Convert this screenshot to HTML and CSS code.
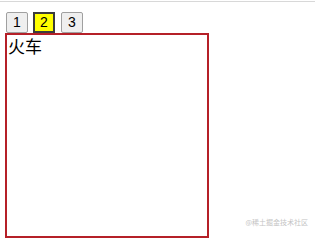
FILE: index.html
```html
<!DOCTYPE html>
<html lang="zh-CN">

<head>
	<title>Tabs</title>
	<meta charset="utf-8">
	<meta name="viewport" content="width=device-width, initial-scale=1.0">
	<link rel="stylesheet" href="styles.css">
</head>

<body>

	<div class="topline"></div>

	<div class="tabs">
		<button class="tab">1</button>
		<button class="tab active">2</button>
		<button class="tab">3</button>
	</div>

	<div class="panel">火车</div>

	<div class="watermark">@稀土掘金技术社区</div>

</body>

</html>
```

FILE: styles.css
```css
*,
*:before,
*:after {
	box-sizing: border-box;
}

body {
	font-family: "Noto Sans CJK SC", "Liberation Sans", sans-serif;
	margin: 0;
	padding: 0 5px;
	position: relative;
	height: 246px;
	background: #ffffff;
}

.topline {
	border-top: 1px solid #d8d8d8;
	margin: 1px -5px 0;
}

/**
 * Tabs
 */
.tabs {
	display: flex;
	gap: 5px;
	margin-top: 10px;
	padding-left: 1px;
}

.tab {
	font-family: "Liberation Sans", sans-serif;
	font-size: 14px;
	width: 22px;
	height: 21px;
	padding: 0;
	background-color: #efefef;
	border: 1px solid #a0a0a0;
	border-radius: 2px;
	color: #000000;
	line-height: 19px;
}

.tab.active {
	background-color: #ffff00;
	border: 2px solid #3c3c3c;
	border-radius: 0;
	line-height: 17px;
}

.tab.active + .tab {
	margin-left: 1px;
}

/**
 * Panel
 */
.panel {
	width: 204px;
	height: 205px;
	margin-top: 0;
	border: 2px solid #b52028;
	font-size: 17px;
	line-height: 22px;
	padding-left: 1px;
	color: #000000;
}

.watermark {
	position: absolute;
	right: 7px;
	top: 217px;
	font-size: 7px;
	color: #c4c4c4;
}
```
